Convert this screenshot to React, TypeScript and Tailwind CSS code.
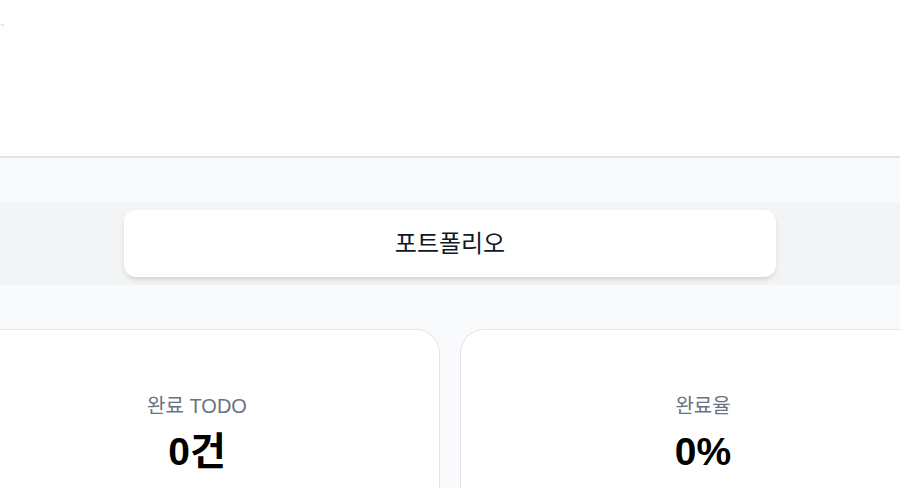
import React from "react";

const font = { fontFamily: '"Liberation Sans", "Noto Sans CJK KR", sans-serif' };

function StatCard({ label, value }: { label: string; value: string }) {
  return (
    <div className="w-[486px] shrink-0 h-[200px] rounded-3xl border border-[#e2e4e8] bg-white flex flex-col items-center pt-[62px]">
      <div className="text-[20px] leading-[28px] text-gray-500">{label}</div>
      <div className="mt-[10px] text-[39px] leading-[44px] font-bold text-black">{value}</div>
    </div>
  );
}

export default function App() {
  return (
    <div className="w-[900px] h-[488px] overflow-hidden bg-white" style={font}>
      <div className="h-[158px] border-b-2 border-[#e2e4e8] bg-white pt-[14px]">
        <div className="-ml-[10px] text-[12px] leading-[16px] text-blue-300 whitespace-nowrap">
          요.
        </div>
      </div>
      <div className="bg-[#f8fafc] pt-[44px]">
        <div className="bg-[#f3f4f6] py-[8px]">
          <div className="mx-auto w-[652px] h-[67px] rounded-xl bg-white shadow-md flex items-center justify-center">
            <span className="text-[24px] font-normal text-gray-900">포트폴리오</span>
          </div>
        </div>
        <div className="pt-[44px] -ml-[46px] w-[992px] flex gap-[20px]">
          <StatCard label="완료 TODO" value="0건" />
          <StatCard label="완료율" value="0%" />
        </div>
      </div>
    </div>
  );
}
